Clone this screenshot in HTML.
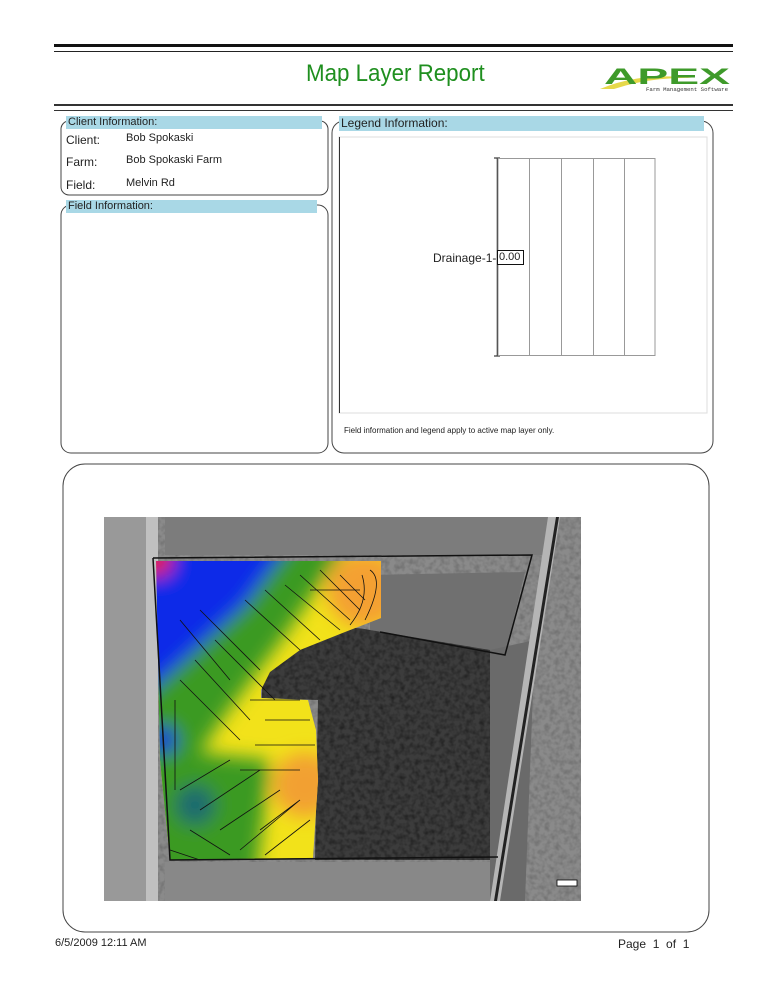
<!DOCTYPE html>
<html><head><meta charset="utf-8"><style>
html,body{margin:0;padding:0;background:#fff;}
body{width:768px;height:994px;position:relative;overflow:hidden;font-family:"Liberation Sans",Arial,sans-serif;}
.t{position:absolute;white-space:nowrap;color:#222;}
</style></head><body>
<svg width="768" height="994" style="position:absolute;left:0;top:0" xmlns="http://www.w3.org/2000/svg">
<defs>
<filter id="b" x="-30%" y="-30%" width="160%" height="160%"><feGaussianBlur stdDeviation="9"/></filter>
<filter id="n" x="0" y="0" width="100%" height="100%">
<feTurbulence type="fractalNoise" baseFrequency="0.2" numOctaves="2" seed="3"/>
<feColorMatrix type="matrix" values="0 0 0 0 0  0 0 0 0 0  0 0 0 0 0  0 0 0 -1.6 1.0"/>
</filter>
<clipPath id="cf"><path d="M156,561 L381,561 L381,618 L345,632 L300,650 L270,672 L261,690 L261,698 L308,700 L316,730 L318,780 L313,858 L170,860 L160,760 Z"/></clipPath>
<clipPath id="cm"><rect x="104" y="517" width="477" height="384"/></clipPath>
<clipPath id="cw"><path d="M262,650 Q320,620 370,630 L490,650 L500,860 L315,860 L318,700 L262,698 Z"/></clipPath>
</defs>
<rect x="54" y="44" width="679" height="3" fill="#111"/>
<rect x="54" y="51" width="679" height="1" fill="#222"/>
<rect x="54" y="104" width="679" height="2" fill="#333"/>
<rect x="54" y="110" width="679" height="1" fill="#333"/>
<!-- logo -->
<path d="M600,89 Q640,72 692,78 Q650,77 614,89 Z" fill="#e6d84a"/>
<text x="604" y="84" font-family="Liberation Sans" font-weight="bold" font-size="22" fill="#3e9a2a" textLength="126" lengthAdjust="spacingAndGlyphs">APEX</text>
<text x="646" y="91" font-family="Liberation Mono" font-size="5" fill="#333" textLength="82" lengthAdjust="spacingAndGlyphs">Farm Management Software</text>
<rect x="61" y="121" width="267" height="74" rx="8" fill="none" stroke="#444"/>
<rect x="66" y="116" width="256" height="13" fill="#a9d8e6"/>
<rect x="61" y="205" width="267" height="248" rx="10" fill="none" stroke="#444"/>
<rect x="66" y="200" width="251" height="13" fill="#a9d8e6"/>
<rect x="332" y="121" width="381" height="332" rx="12" fill="none" stroke="#444"/>
<rect x="339" y="116" width="365" height="15" fill="#a9d8e6"/>
<rect x="339" y="137" width="368" height="276" fill="#fff" stroke="#ddd"/>
<line x1="339.5" y1="137" x2="339.5" y2="413" stroke="#333"/>
<line x1="497.5" y1="158" x2="497.5" y2="356" stroke="#111" stroke-width="1.5"/>
<line x1="494" y1="158" x2="500" y2="158" stroke="#111"/>
<line x1="494" y1="356" x2="500" y2="356" stroke="#111"/>
<g stroke="#999" fill="none">
<rect x="498" y="158.5" width="157" height="197"/>
<line x1="529.5" y1="158" x2="529.5" y2="356"/>
<line x1="561.5" y1="158" x2="561.5" y2="356"/>
<line x1="593.5" y1="158" x2="593.5" y2="356"/>
<line x1="624.5" y1="158" x2="624.5" y2="356"/>
</g>
<rect x="497.5" y="250.5" width="26" height="14" fill="#fff" stroke="#111"/>
<rect x="63" y="464" width="646" height="468" rx="22" fill="none" stroke="#444"/>
<g clip-path="url(#cm)">
<rect x="104" y="517" width="477" height="384" fill="#8a8a8a"/>
<rect x="104" y="517" width="477" height="384" fill="#555" filter="url(#n)" opacity="0.22"/>
<rect x="104" y="517" width="44" height="384" fill="#999"/>
<rect x="146" y="517" width="12" height="384" fill="#c0c0c0"/>
<rect x="165" y="517" width="385" height="38" fill="#7c7c7c"/>
<rect x="165" y="862" width="330" height="39" fill="#888"/>
<path d="M370,575 L525,572 L505,655 L370,630 Z" fill="#707070"/>
<path d="M262,650 Q320,620 370,630 L490,650 L500,860 L315,860 L318,700 L262,698 Z" fill="#3c3c3c"/>
<g clip-path="url(#cw)"><rect x="250" y="620" width="260" height="250" fill="#111" filter="url(#n)" opacity="0.5"/></g>
<path d="M490,650 L535,640 L525,901 L490,901 Z" fill="#6a6a6a"/>
<path d="M548,517 L560,517 L500,901 L490,901 Z" fill="#b5b5b5"/>
<path d="M556,517 L559,517 L497,901 L494,901 Z" fill="#222"/>
<rect x="557" y="880" width="20" height="6" fill="#fff" stroke="#000" stroke-width="0.8"/>
<g clip-path="url(#cf)">
<rect x="150" y="555" width="240" height="310" fill="#f2e21a"/>
<g filter="url(#b)">
<circle cx="365" cy="590" r="38" fill="#f4a030"/>
<circle cx="305" cy="785" r="32" fill="#f2a030"/>
<path d="M120,540 L350,540 L285,635 L225,715 L175,790 L120,810 Z" fill="#3a9a20"/>
<path d="M120,745 L270,760 L255,890 L120,890 Z" fill="#3a9a20"/>
<path d="M120,530 L300,530 L245,605 L190,655 L140,700 L120,700 Z" fill="#0a2ae8"/>
<circle cx="163" cy="740" r="14" fill="#1030d8"/>
<circle cx="195" cy="805" r="20" fill="#1a6a70"/>
<circle cx="156" cy="560" r="16" fill="#e82010"/>
</g>
</g>
<path d="M153,558 L532,555 L505,655 L380,632 M153,558 L170,860 L498,857" fill="none" stroke="#111" stroke-width="1.5"/>
<g stroke="#111" stroke-width="0.8" fill="none">
<path d="M180,620 L230,680 M200,610 L260,670 M215,640 L275,700 M195,660 L250,720 M180,680 L240,740 M245,600 L300,650 M265,590 L320,640 M285,585 L340,630 M300,575 L350,620 M320,570 L360,610 M340,575 L365,600"/>
<path d="M265,720 L310,720 M255,745 L315,745 M240,770 L300,770 M250,700 L300,700 M180,790 L230,760 M200,810 L260,770 M220,830 L280,790 M240,850 L300,800 M190,830 L230,855 M260,830 L300,800 M265,855 L310,820"/>
<path d="M370,570 Q385,580 365,620 M362,575 Q370,600 350,625 M310,590 L360,590 M175,700 L175,790 M170,850 L200,860"/>
</g>
</g>
</svg>
<div class="t" style="left:306px;top:60px;font-size:24px;color:#1f8f1f;transform:scaleX(0.93);transform-origin:0 0;">Map Layer Report</div>
<div class="t" style="left:68px;top:116px;font-size:11px;">Client Information:</div>
<div class="t" style="left:66px;top:133px;font-size:12px;">Client:</div>
<div class="t" style="left:126px;top:132px;font-size:11px;">Bob Spokaski</div>
<div class="t" style="left:66px;top:155px;font-size:12px;">Farm:</div>
<div class="t" style="left:126px;top:154px;font-size:11px;">Bob Spokaski Farm</div>
<div class="t" style="left:66px;top:178px;font-size:12px;">Field:</div>
<div class="t" style="left:126px;top:177px;font-size:11px;">Melvin Rd</div>
<div class="t" style="left:68px;top:200px;font-size:11px;">Field Information:</div>
<div class="t" style="left:341px;top:116px;font-size:12px;">Legend Information:</div>
<div class="t" style="left:433px;top:251px;font-size:12px;">Drainage-1-</div>
<div class="t" style="left:499px;top:251px;font-size:11px;">0.00</div>
<div class="t" style="left:344px;top:426px;font-size:8px;">Field information and legend apply to active map layer only.</div>
<div class="t" style="left:55px;top:937px;font-size:11px;">6/5/2009 12:11 AM</div>
<div class="t" style="left:618px;top:937px;font-size:12px;">Page &nbsp;1 &nbsp;of &nbsp;1</div>
</body></html>
